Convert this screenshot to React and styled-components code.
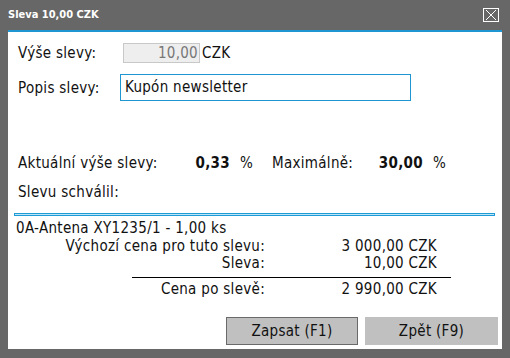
import React from 'react';
import styled, { createGlobalStyle } from 'styled-components';

const GlobalStyle = createGlobalStyle`
  html, body {
    margin: 0;
    padding: 0;
    background: #676767;
  }
  * {
    box-sizing: border-box;
  }
`;

const Window = styled.div`
  width: 510px;
  height: 358px;
  background: #676767;
  padding: 0 8px 9px 8px;
  display: flex;
  flex-direction: column;
  font-family: "DejaVu Sans Condensed", "DejaVu Sans", sans-serif;
  color: #111;
`;

const TitleBar = styled.div`
  height: 30px;
  display: flex;
  align-items: center;
  justify-content: space-between;
`;

const Title = styled.span`
  color: #fff;
  font-weight: bold;
  font-size: 11px;
  margin-top: -1px;
`;

const CloseButton = styled.div`
  width: 16px;
  height: 14px;
  border: 1px solid #fff;
  margin-right: 3px;
  margin-top: -1px;
  display: flex;
  align-items: center;
  justify-content: center;
`;

const Panel = styled.div`
  flex: 1;
  background: #fff;
  border-top: 2px solid #1e96d2;
  display: flex;
  flex-direction: column;
`;

const Form = styled.div`
  padding: 11px 0 0 10px;
  display: flex;
  flex-direction: column;
  gap: 11px;
  font-size: 15px;
  letter-spacing: 0.3px;
`;

const Row = styled.div`
  display: flex;
  align-items: center;
  height: ${p => p.$h}px;
`;

const Label = styled.span`
  width: ${p => p.$w}px;
  flex: none;
  white-space: nowrap;
`;

const AmountBox = styled.div`
  width: 77px;
  height: 20px;
  margin-left: 3px;
  background: #eeeeee;
  border: 1px solid #c8c8c8;
  color: #777;
  text-align: right;
  padding-right: 1px;
  line-height: 18px;
`;

const Unit = styled.span`
  margin-left: 2px;
`;

const TextInput = styled.div`
  width: 291px;
  height: 27px;
  border: 1.5px solid #1e96d2;
  padding-left: 4px;
  line-height: 24px;
`;

const Stats = styled.div`
  margin-top: 53px;
  padding-left: 10px;
  font-size: 15px;
  letter-spacing: 0.3px;
  line-height: 18px;
  display: flex;
  flex-direction: column;
  gap: 11px;
`;

const StatRow = styled.div`
  display: flex;
`;

const Value = styled.span`
  width: ${p => p.$w}px;
  flex: none;
  text-align: right;
  font-weight: bold;
`;

const Percent = styled.span`
  width: ${p => p.$w}px;
  flex: none;
  padding-left: 10px;
`;

const Separator = styled.div`
  margin: 12px 7px 0 6px;
  height: 3px;
  background: #bfe6f7;
  border: 1px solid #1e9ad6;
`;

const Item = styled.div`
  margin-top: 4px;
  padding-left: 8px;
  font-size: 15px;
  letter-spacing: 0.3px;
  line-height: 17.5px;
`;

const Breakdown = styled.div`
  margin-left: 32px;
  width: 411px;
  display: grid;
  grid-template-columns: 225px 172px 14px;
  font-size: 15px;
  letter-spacing: 0.3px;
  line-height: 17.5px;
`;

const Cell = styled.span`
  text-align: right;
  white-space: nowrap;
  grid-column: ${p => p.$col};
`;

const Rule = styled.div`
  grid-column: 1 / 4;
  height: 1px;
  background: #000;
  margin: 4px 0 3px 92px;
`;

const Buttons = styled.div`
  margin-top: auto;
  margin-bottom: 4px;
  display: flex;
  justify-content: flex-end;
  gap: 7px;
  padding-right: 4px;
`;

const Button = styled.div`
  width: ${p => p.$w}px;
  height: 28px;
  background: #c0c0c0;
  border: ${p => (p.$primary ? '1px solid #6a6a6a' : 'none')};
  display: flex;
  align-items: center;
  justify-content: center;
  font-size: 15px;
  letter-spacing: 0.3px;
  color: #111;
`;

export default function App() {
  return (
    <>
      <GlobalStyle />
      <Window>
        <TitleBar>
          <Title>Sleva 10,00 CZK</Title>
          <CloseButton>
            <svg width="12" height="10" viewBox="0 0 12 10">
              <path d="M1 0 L11 10 M11 0 L1 10" stroke="#fff" strokeWidth="1" />
            </svg>
          </CloseButton>
        </TitleBar>
        <Panel>
          <Form>
            <Row $h={20}>
              <Label $w={102}>Výše slevy:</Label>
              <AmountBox>10,00</AmountBox>
              <Unit>CZK</Unit>
            </Row>
            <Row $h={27}>
              <Label $w={102}>Popis slevy:</Label>
              <TextInput>Kupón newsletter</TextInput>
            </Row>
          </Form>
          <Stats>
            <StatRow>
              <Label $w={160}>Aktuální výše slevy:</Label>
              <Value $w={52}>0,33</Value>
              <Percent $w={42}>%</Percent>
              <Label $w={88}>Maximálně:</Label>
              <Value $w={63}>30,00</Value>
              <Percent $w={30}>%</Percent>
            </StatRow>
            <StatRow>
              <Label $w={200}>Slevu schválil:</Label>
            </StatRow>
          </Stats>
          <Separator />
          <Item>0A-Antena XY1235/1 - 1,00 ks</Item>
          <Breakdown>
            <Cell $col={1}>Výchozí cena pro tuto slevu:</Cell>
            <Cell $col={2}>3 000,00 CZK</Cell>
            <Cell $col={1}>Sleva:</Cell>
            <Cell $col={2}>10,00 CZK</Cell>
            <Rule />
            <Cell $col={1}>Cena po slevě:</Cell>
            <Cell $col={2}>2 990,00 CZK</Cell>
          </Breakdown>
          <Buttons>
            <Button $w={132} $primary>Zapsat (F1)</Button>
            <Button $w={133}>Zpět (F9)</Button>
          </Buttons>
        </Panel>
      </Window>
    </>
  );
}
